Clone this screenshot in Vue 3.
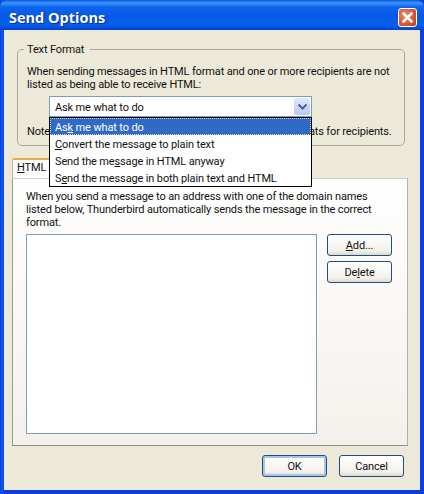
<template>
  <div class="window">
    <div class="titlebar">
      <span class="title">Send Options</span>
      <button class="close">
        <svg width="13" height="13" viewBox="0 0 13 13">
          <path d="M2.5 2.5 10.5 10.5M10.5 2.5 2.5 10.5" stroke="#fff" stroke-width="2.6" stroke-linecap="round" fill="none" />
        </svg>
      </button>
    </div>

    <div class="client">
      <fieldset class="group">
        <legend>Text Format</legend>
        <p class="intro">
          When sending messages in HTML format and one or more recipients are not
          listed as being able to receive HTML:
        </p>
        <div class="select-wrap">
          <div class="select">
            <span class="select-value">Ask me what to do</span>
            <span class="arrow">
              <svg width="11" height="8" viewBox="0 0 11 8">
                <path d="M1.5 1.5 5.5 5.5 9.5 1.5" stroke="#4d6185" stroke-width="2" fill="none" />
              </svg>
            </span>
          </div>
          <ul class="popup">
            <li class="active">As<u>k</u> me what to do</li>
            <li><u>C</u>onvert the message to plain text</li>
            <li>Send the me<u>s</u>sage in HTML anyway</li>
            <li>S<u>e</u>nd the message in both plain text and HTML</li>
          </ul>
        </div>
        <p class="note">Note: Use the Address Book to specify preferred email formats for recipients.</p>
      </fieldset>

      <div class="tabs">
        <div class="tab"><u>H</u>TML Domains</div>
      </div>
      <div class="panel">
        <p class="panel-text">
          When you send a message to an address with one of the domain names
          listed below, Thunderbird automatically sends the message in the correct
          format.
        </p>
        <div class="domain-row">
          <div class="listbox"></div>
          <div class="side-buttons">
            <button class="btn"><u>A</u>dd...</button>
            <button class="btn">De<u>l</u>ete</button>
          </div>
        </div>
      </div>

      <div class="footer">
        <button class="btn default">OK</button>
        <button class="btn">Cancel</button>
      </div>
    </div>
  </div>
</template>

<script setup>
</script>

<style>
html,
body {
  margin: 0;
  background: #0a4fd8;
}
</style>

<style scoped>
.window {
  width: 424px;
  height: 494px;
  display: flex;
  flex-direction: column;
  overflow: hidden;
  font-family: Roboto, "Liberation Sans", sans-serif;
  font-size: 11px;
  letter-spacing: -0.14px;
  line-height: 13px;
  color: #111;
  background: linear-gradient(to right, #0a3ee0 0, #0a5cf0 3px, #0a3ee0 4px);
}

.titlebar {
  flex: 0 0 30px;
  box-sizing: border-box;
  display: flex;
  align-items: center;
  justify-content: space-between;
  padding: 4px 7px 0 9px;
  background: linear-gradient(to bottom, #0a5ae0 0, #3d95fb 3px, #0f65ee 7px, #0558e6 16px, #0560ef 25px, #0342c8 30px);
  border-radius: 7px 7px 0 0;
}

.title {
  font-family: "Open Sans", sans-serif;
  font-size: 14.5px;
  font-weight: 700;
  letter-spacing: 0;
  color: #fff;
  text-shadow: 1px 1px 1px #0a2a90;
}

.close {
  width: 19px;
  height: 19px;
  padding: 0;
  display: flex;
  align-items: center;
  justify-content: center;
  border: 1px solid #fff;
  border-radius: 3px;
  background: radial-gradient(circle at 35% 35%, #e8866a, #d4502c 70%, #b23a1c);
}

.client {
  flex: 1;
  margin: 0 4px 4px;
  padding: 13px 12px 13px 8px;
  display: flex;
  flex-direction: column;
  background: #ece9d8;
}

.group {
  margin: 0 3px 0 5px;
  padding: 9px 9px 0 9px;
  height: 103px;
  box-sizing: border-box;
  border: 1px solid #a9a89a;
  border-radius: 5px;
  min-width: 0;
}

legend {
  padding: 0 6px 0 3px;
  margin-left: -3px;
}

p {
  margin: 0;
}

.select-wrap {
  position: relative;
  margin: 5px 0 0 22px;
  width: 263px;
}

.select {
  height: 21px;
  box-sizing: border-box;
  padding: 0 1px 0 5px;
  display: flex;
  align-items: center;
  justify-content: space-between;
  background: #fff;
  border: 1px solid #7f9db9;
}

.select-value {
  padding-top: 1px;
}

.arrow {
  width: 16px;
  height: 17px;
  display: flex;
  align-items: center;
  justify-content: center;
  border-radius: 2px;
  background: linear-gradient(to bottom, #dfe8fd, #b6c9f7);
}

.popup {
  position: absolute;
  top: 21px;
  left: 0;
  width: 263px;
  box-sizing: border-box;
  margin: 0;
  padding: 0;
  list-style: none;
  background: #fff;
  border: 1px solid #000;
  z-index: 2;
}

.popup li {
  height: 17px;
  padding-left: 5px;
  line-height: 19px;
}

.popup li.active {
  background: #316ac5;
  color: #fff;
  outline: 1px dotted #c9d6ee;
  outline-offset: -1px;
}

.note {
  margin-top: 8px;
}

.tabs {
  margin-top: 12px;
  height: 20px;
  display: flex;
}

.tab {
  width: 100px;
  height: 20px;
  box-sizing: border-box;
  padding: 1px 0 0 4px;
  background: #fcfcfe;
  border: 1px solid #b4b8b2;
  border-bottom: 0;
  border-top: 2px solid #e9a84a;
  border-radius: 3px 3px 0 0;
}

.panel {
  height: 268px;
  box-sizing: border-box;
  padding: 11px 15px 11px 13px;
  border: 1px solid #919b9c;
  border-top-color: #d3d1c6;
  border-right-color: #b3b1a6;
  border-bottom-color: #8f8f88;
  background: linear-gradient(to bottom, #fff, #f4f1ec);
}

.domain-row {
  margin-top: 5px;
  display: flex;
  justify-content: space-between;
}

.listbox {
  width: 291px;
  height: 200px;
  box-sizing: border-box;
  background: #fff;
  border: 1px solid #7f9db9;
}

.side-buttons {
  display: flex;
  flex-direction: column;
  gap: 5px;
}

.btn {
  width: 65px;
  height: 22px;
  padding: 0;
  font: inherit;
  letter-spacing: inherit;
  color: #111;
  border: 1px solid #1f4f80;
  border-radius: 3px;
  background: linear-gradient(to bottom, #fff, #f2f1ea 80%, #dcd8ca);
}

.btn.default {
  box-shadow: inset 0 0 0 2px #a9c4ec;
}

.footer {
  margin-top: 9px;
  display: flex;
  justify-content: flex-end;
  gap: 12px;
  margin-right: 4px;
}
</style>
